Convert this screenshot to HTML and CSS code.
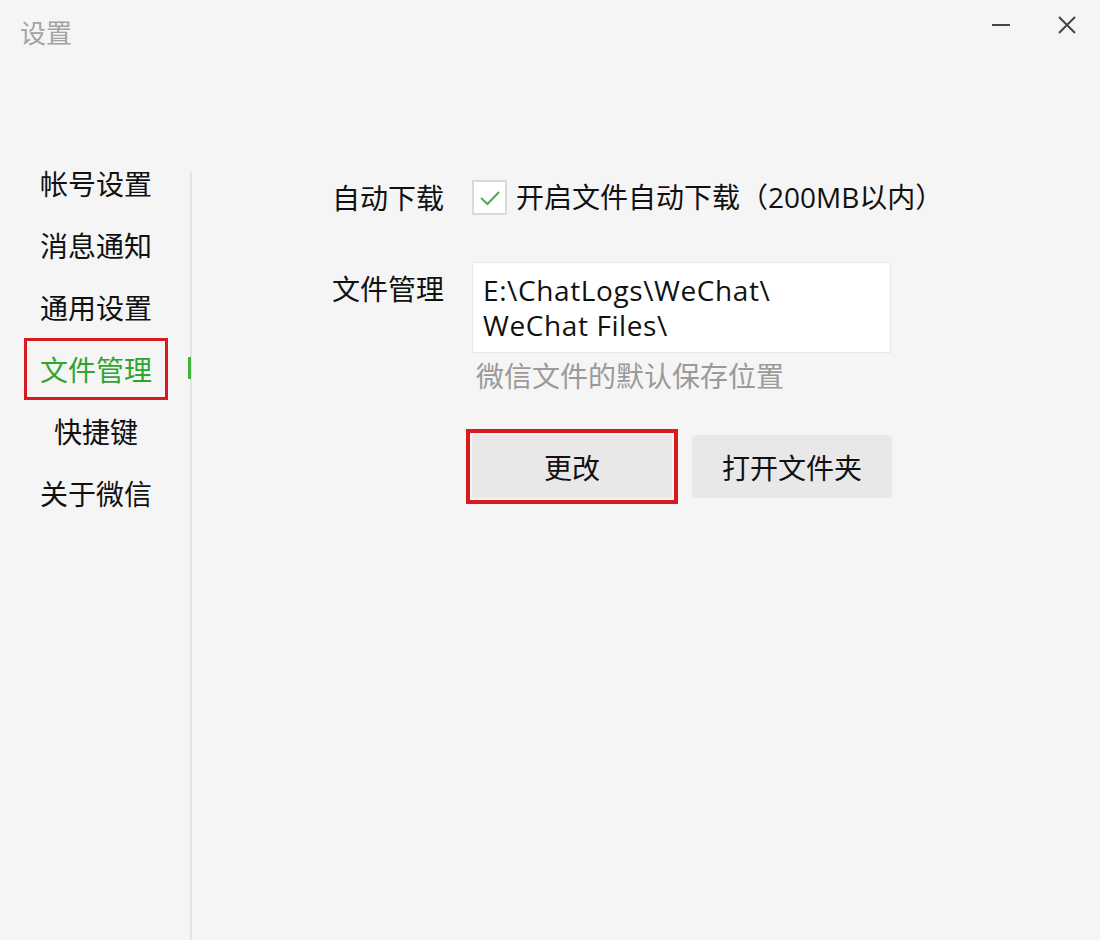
FILE: index.html
```html
<!DOCTYPE html>
<html lang="zh-CN">
<head>
    <meta charset="UTF-8">
    <meta name="viewport" content="width=device-width, initial-scale=1.0">
    <title>设置</title>
    <link rel="stylesheet" href="styles.css">
</head>
<body>
    <div class="titlebar">
        <div class="title">设置</div>
        <div class="win_btns">
            <span class="btn_min"></span>
            <svg class="btn_close" width="18" height="18" viewBox="0 0 18 18">
                <path d="M1 1 L17 17 M17 1 L1 17" stroke="#444" stroke-width="2" fill="none"/>
            </svg>
        </div>
    </div>

    <div class="main">
        <div class="nav">
            <div class="nav_item">帐号设置</div>
            <div class="nav_item">消息通知</div>
            <div class="nav_item">通用设置</div>
            <div class="nav_item active">文件管理</div>
            <div class="nav_item">快捷键</div>
            <div class="nav_item">关于微信</div>
        </div>
        <div class="divider"></div>

        <div class="content">
            <div class="row">
                <div class="label">自动下载</div>
                <div class="check_line">
                    <span class="checkbox">
                        <svg width="22" height="16" viewBox="0 0 22 16">
                            <path d="M2 8 L8.5 14 L20 2" stroke="#4cae4f" stroke-width="2" fill="none"/>
                        </svg>
                    </span>
                    <span class="check_text">开启文件自动下载（200MB以内）</span>
                </div>
            </div>

            <div class="row row_files">
                <div class="label label_top">文件管理</div>
                <div>
                    <div class="path_box">E:\ChatLogs\WeChat\<br>WeChat Files\</div>
                    <div class="hint">微信文件的默认保存位置</div>
                </div>
            </div>

            <div class="buttons">
                <button class="btn marked">更改</button>
                <button class="btn">打开文件夹</button>
            </div>
        </div>
    </div>
</body>
</html>
```

FILE: styles.css
```css
body {
    margin: 0;
    background-color: #f5f5f5;
    font-family: "Open Sans", "Noto Sans CJK SC", sans-serif;
    color: #111;
    width: 1100px;
    height: 940px;
    overflow: hidden;
}

.titlebar {
    display: flex;
    justify-content: space-between;
    height: 64px;
    padding: 0 24px 0 20px;
}

.title {
    font-family: "Noto Sans CJK SC", sans-serif;
    font-size: 26px;
    line-height: 64px;
    color: #a3a3a3;
}

.win_btns {
    display: flex;
    align-items: flex-start;
    gap: 48px;
    padding-top: 16px;
}

.btn_min {
    display: block;
    width: 18px;
    height: 2px;
    margin-top: 8px;
    background-color: #444;
}

.main {
    display: flex;
    padding-top: 88px;
    height: 788px;
}

.nav {
    width: 190px;
    padding-left: 24px;
    box-sizing: border-box;
}

.nav_item {
    position: relative;
    width: 144px;
    height: 62px;
    box-sizing: border-box;
    border: 3px solid transparent;
    font-family: "Noto Sans CJK SC", sans-serif;
    font-size: 28px;
    line-height: 56px;
    text-align: center;
    color: #111;
}

.nav_item.active {
    color: #2fa52f;
    border: 3px solid #db1a1f;
}

.nav_item.active::after {
    content: "";
    position: absolute;
    left: 161px;
    top: 16px;
    width: 3px;
    height: 22px;
    background-color: #3db53d;
}

.divider {
    width: 2px;
    margin-top: 20px;
    background-color: #e4e4e4;
}

.content {
    padding: 28px 0 0 140px;
}

.row {
    display: flex;
    gap: 28px;
}

.label {
    width: 112px;
    font-family: "Noto Sans CJK SC", sans-serif;
    font-size: 28px;
    line-height: 35px;
    white-space: nowrap;
}

.label_top {
    padding-top: 9px;
}

.check_line {
    display: flex;
    align-items: center;
    gap: 9px;
}

.checkbox {
    display: flex;
    align-items: center;
    justify-content: center;
    width: 35px;
    height: 35px;
    box-sizing: border-box;
    border: 2px solid #dadada;
    background-color: #fff;
}

.check_text {
    font-size: 28px;
    line-height: 35px;
}

.row_files {
    margin-top: 47px;
}

.path_box {
    width: 419px;
    height: 91px;
    box-sizing: border-box;
    padding: 10px 10px;
    border: 1px solid #e8e8e8;
    background-color: #fff;
    font-size: 28px;
    letter-spacing: 0.6px;
    line-height: 35px;
}

.hint {
    margin-top: 5px;
    padding-left: 4px;
    font-family: "Noto Sans CJK SC", sans-serif;
    font-size: 28px;
    line-height: 35px;
    color: #9a9a9a;
}

.buttons {
    display: flex;
    gap: 20px;
    margin: 42px 0 0 140px;
}

.btn {
    width: 200px;
    height: 63px;
    border: none;
    border-radius: 4px;
    background-color: #e8e8e8;
    font-family: "Noto Sans CJK SC", sans-serif;
    font-size: 28px;
    color: #111;
    padding: 0;
}

.btn.marked {
    outline: 4px solid #db1a1f;
    outline-offset: 2px;
    border-radius: 0;
}
```
